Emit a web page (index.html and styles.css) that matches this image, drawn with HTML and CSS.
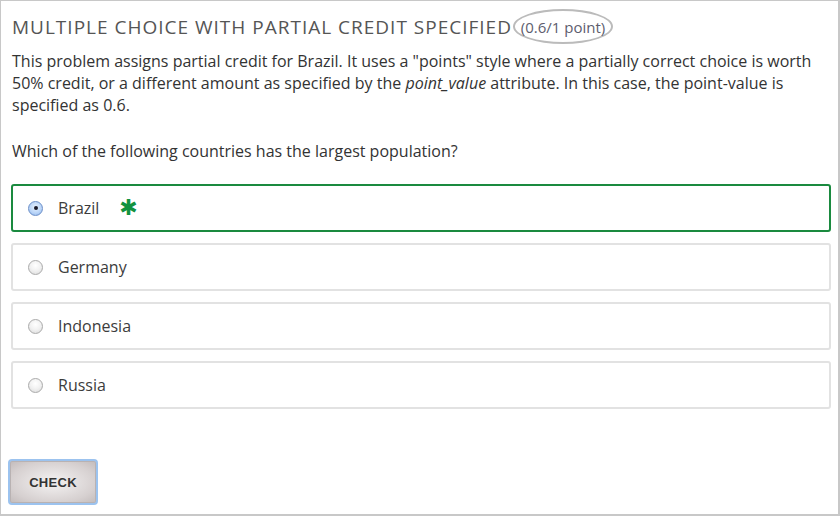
FILE: index.html
```html
<!DOCTYPE html>
<html>
<head>
<meta charset="utf-8">
<link rel="stylesheet" href="styles.css">
</head>
<body>
<div class="problem">
  <h3 class="title">Multiple Choice with Partial Credit Specified<span class="score">(0.6/1 point)</span></h3>
  <p class="desc">This problem assigns partial credit for Brazil. It uses a "points" style where a partially correct choice is worth 50% credit, or a different amount as specified by the <em>point_value</em> attribute. In this case, the point-value is specified as 0.6.</p>
  <p class="question">Which of the following countries has the largest population?</p>
  <div class="choices">
    <label class="choice partial"><span class="radio checked"></span><span class="label">Brazil</span><span class="star">&#10033;</span></label>
    <label class="choice"><span class="radio"></span><span class="label">Germany</span></label>
    <label class="choice"><span class="radio"></span><span class="label">Indonesia</span></label>
    <label class="choice"><span class="radio"></span><span class="label">Russia</span></label>
  </div>
  <div class="actions">
    <button class="check">CHECK</button>
  </div>
</div>
</body>
</html>
```

FILE: styles.css
```css
html, body {
  margin: 0;
  padding: 0;
  background: #fff;
}
.problem {
  box-sizing: border-box;
  width: 840px;
  height: 516px;
  border: 1px solid #c8c8c8;
  border-right-width: 2px;
  border-bottom-width: 2px;
  padding: 7px 8px 0 10px;
  font-family: "Open Sans", sans-serif;
  color: #333;
}
.title {
  margin: 0;
  height: 37px;
  display: flex;
  align-items: center;
  padding-left: 1px;
  font-size: 19px;
  font-weight: 400;
  text-transform: uppercase;
  letter-spacing: 1px;
  color: #555;
}
.score {
  box-sizing: border-box;
  display: inline-flex;
  align-items: center;
  justify-content: center;
  margin-left: 1px;
  width: 100px;
  height: 35px;
  border: 2px solid #bbb;
  border-radius: 50%;
  font-size: 15px;
  letter-spacing: 0;
  text-transform: none;
  color: #5d5d6e;
}
.desc {
  margin: 5px 0 0 1px;
  font-size: 16px;
  line-height: 22px;
}
.question {
  margin: 24px 0 0 1px;
  font-size: 16px;
  line-height: 22px;
}
.choices {
  margin-top: 22px;
  display: flex;
  flex-direction: column;
  gap: 11px;
}
.choice {
  box-sizing: border-box;
  height: 48px;
  width: 820px;
  border: 2px solid #e2e2e2;
  border-radius: 3px;
  display: flex;
  align-items: center;
  padding-left: 15px;
  font-size: 16px;
  color: #3c3c3c;
}
.choice.partial {
  border-color: #1a8a3f;
}
.radio {
  box-sizing: border-box;
  width: 15px;
  height: 15px;
  border-radius: 50%;
  border: 1px solid #aaa;
  background: radial-gradient(circle at 50% 35%, #fff 0%, #f1f1f1 50%, #d8d8d8 100%);
  position: relative;
  flex: none;
}
.radio.checked {
  border-color: #6c8fc8;
  background: radial-gradient(circle at 50% 40%, #e8f2ff 0%, #b7d3f7 60%, #86aee8 100%);
}
.radio.checked::after {
  content: "";
  position: absolute;
  left: 4.5px;
  top: 4.5px;
  width: 4px;
  height: 4px;
  border-radius: 50%;
  background: #1a1a2a;
}
.label {
  margin-left: 15px;
}
.star {
  margin-left: 20px;
  color: #12923f;
  font-family: "DejaVu Sans", sans-serif;
  font-size: 22px;
  font-weight: bold;
  line-height: 1;
}
.actions {
  margin-top: 50px;
  margin-left: -3px;
}
.check {
  box-sizing: border-box;
  width: 90px;
  height: 46px;
  border: 2px solid #9cc3ef;
  border-radius: 4px;
  padding: 0;
  background: radial-gradient(ellipse at 50% 50%, #ece9e9 20%, #d6d0d0 70%, #c2bbbb 100%);
  box-shadow: inset 0 0 0 1px #b9b2b2;
  font-family: "Liberation Sans", Arial, sans-serif;
  font-weight: bold;
  font-size: 13px;
  color: #333;
  letter-spacing: 0.3px;
}
```
